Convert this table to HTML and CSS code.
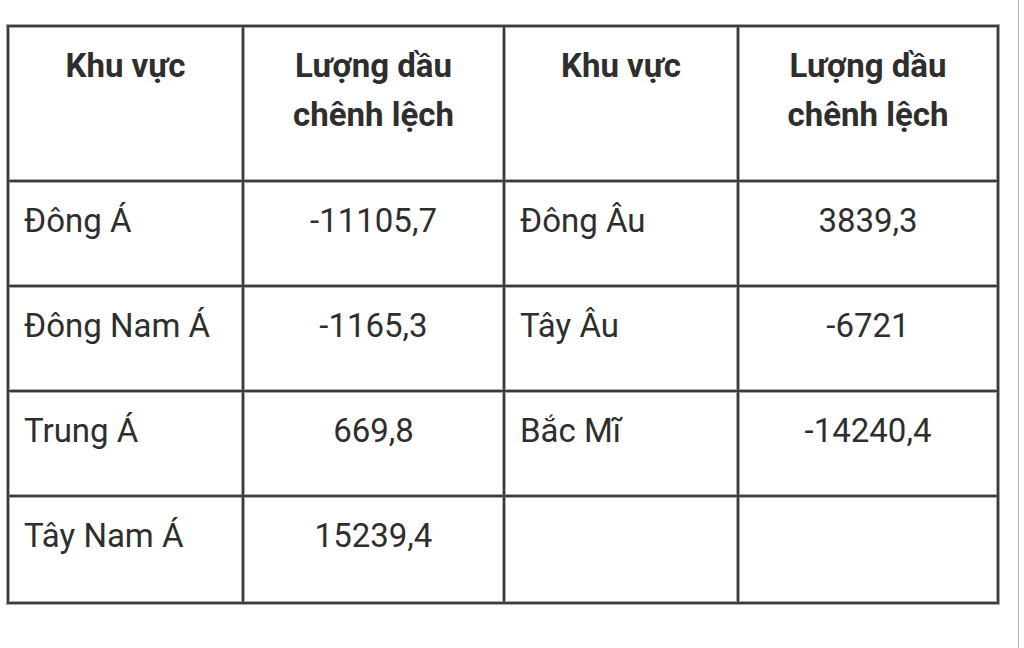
FILE: index.html
```html
<!DOCTYPE html>
<html lang="vi">
<head>
<meta charset="utf-8">
<title>Lượng dầu chênh lệch</title>
<link rel="stylesheet" href="styles.css">
</head>
<body>
<div class="page">
  <table class="data">
    <colgroup>
      <col class="c1"><col class="c2"><col class="c3"><col class="c4">
    </colgroup>
    <thead>
      <tr class="head">
        <th>Khu vực</th>
        <th>Lượng dầu chênh lệch</th>
        <th>Khu vực</th>
        <th>Lượng dầu chênh lệch</th>
      </tr>
    </thead>
    <tbody>
      <tr>
        <td class="name">Đông Á</td>
        <td class="num">-11105,7</td>
        <td class="name">Đông Âu</td>
        <td class="num">3839,3</td>
      </tr>
      <tr>
        <td class="name">Đông Nam Á</td>
        <td class="num">-1165,3</td>
        <td class="name">Tây Âu</td>
        <td class="num">-6721</td>
      </tr>
      <tr>
        <td class="name">Trung Á</td>
        <td class="num">669,8</td>
        <td class="name">Bắc Mĩ</td>
        <td class="num">-14240,4</td>
      </tr>
      <tr class="last">
        <td class="name">Tây Nam Á</td>
        <td class="num">15239,4</td>
        <td class="name"></td>
        <td class="num"></td>
      </tr>
    </tbody>
  </table>
</div>
</body>
</html>
```

FILE: styles.css
```css
html, body {
  margin: 0;
  padding: 0;
  background: #ffffff;
}

.page {
  width: 1019px;
  height: 648px;
  border-right: 1px solid #b4b4b4;
  padding-top: 25px;
  padding-left: 7px;
  box-sizing: border-box;
  font-family: Roboto, "Liberation Sans", sans-serif;
  color: #2e2e2e;
}

.data {
  table-layout: fixed;
  border-collapse: separate;
  border-spacing: 0;
  width: 992px;
  border: 1px solid #3c3c3c;
  box-shadow: 0 0 0 1px #a8a8a8;
}

.c1 { width: 235px; }
.c2 { width: 261px; }
.c3 { width: 234px; }
.c4 { width: 260px; }

.data th,
.data td {
  border: 1px solid #3c3c3c;
  box-shadow: inset 0 0 0 1px #a8a8a8;
  vertical-align: top;
  font-size: 33px;
  line-height: 49px;
  padding: 14px 15px 0 15px;
  box-sizing: border-box;
}

.data th {
  font-weight: 700;
  text-align: center;
  padding-left: 40px;
  padding-right: 40px;
}

.head { height: 155px; }
.data tbody tr { height: 105px; }
.data tbody tr.last { height: 107px; }

.data td.name { text-align: left; font-weight: 400; }
.data td.num { text-align: center; font-weight: 400; }
```
